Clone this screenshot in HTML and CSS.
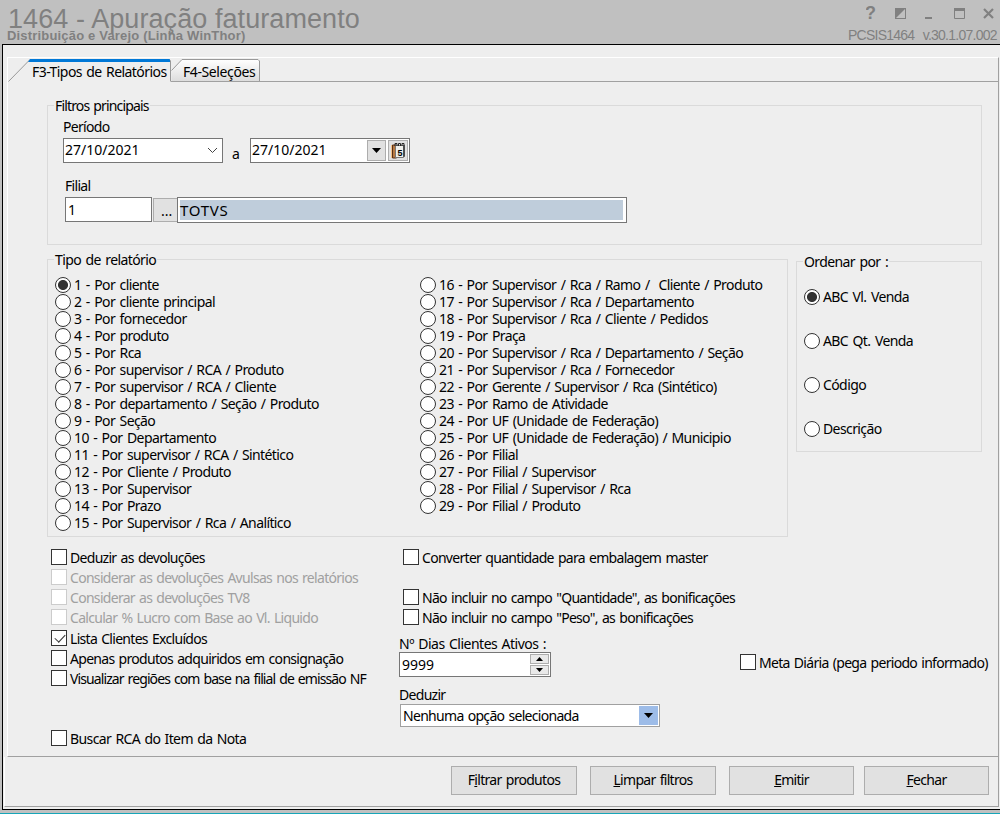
FILE: index.html
```html
<!DOCTYPE html>
<html lang="pt-BR">
  <head>
    <meta charset="UTF-8" />
    <meta name="viewport" content="width=device-width, initial-scale=1.0" />
    <title>1464 - Apuração faturamento</title>
    <link rel="stylesheet" href="styles.css">
  </head>
  <body>
    <div class="window">
      <div class="header">
        <div class="titles">
          <h1>1464 - Apuração faturamento</h1>
          <h2>Distribuição e Varejo (Linha WinThor)</h2>
        </div>
        <div class="header-right">
          <svg class="win-icons" width="134" height="18" viewBox="0 0 134 18">
            <text class="help" x="-1" y="15">?</text>
            <rect x="29.5" y="4.5" width="10" height="10" fill="none" stroke="#808080" />
            <path d="M29 4h11L29 15z" fill="#808080" />
            <rect x="59" y="13" width="7" height="2" fill="#808080" />
            <path d="M88.5 4v10.5h10V4" fill="none" stroke="#808080" />
            <rect x="88" y="4" width="11" height="3" fill="#808080" />
            <path d="M118 5l9 9M127 5l-9 9" stroke="#808080" stroke-width="2.2" />
          </svg>
          <div class="version">PCSIS1464&nbsp; v.30.1.07.002</div>
        </div>
      </div>

      <div class="frame">
        <div class="page">
          <div class="tabs">
            <svg class="tab-shapes" width="260" height="25" viewBox="0 0 260 25">
              <defs>
                <linearGradient id="tabfill" x1="0" y1="0" x2="0" y2="1">
                  <stop offset="0" stop-color="#ffffff" />
                  <stop offset="1" stop-color="#dcdcdc" />
                </linearGradient>
              </defs>
              <path d="M163.5 23.5V12.5L174 1.5h76l1.5 1.5v20.5z" fill="url(#tabfill)" />
              <path d="M163.5 12.5L174 1.5h76l1.5 1.5v20.5" fill="none" stroke="#999999" />
              <path d="M0.5 23.5L22 1.5h139.5l1 1.5v20.5" fill="none" stroke="#999999" />
              <path d="M20 4l2-3h139.5l.5 1v2z" fill="#0078d7" />
            </svg>
            <div class="tab active">F3-Tipos de Relatórios</div>
            <div class="tab">F4-Seleções</div>
            <div class="tab-line"></div>
          </div>

          <div class="content">
            <div class="group filters">
              <span class="legend">Filtros principais</span>
              <div class="label">Período</div>
              <div class="row">
                <div class="field date">
                  <span>27/10/2021</span>
                  <svg class="chevron" width="11" height="7" viewBox="0 0 11 7"><path d="M1 1l4.5 4.5L10 1" fill="none" stroke="#444444" /></svg>
                </div>
                <span class="to">a</span>
                <div class="field date">
                  <span>27/10/2021</span>
                  <div class="mini drop"><svg width="9" height="5" viewBox="0 0 9 5"><path d="M0 0h9L4.5 5z" /></svg></div>
                  <div class="mini cal">
                    <svg width="17" height="18" viewBox="0 0 17 18">
                      <path d="M2.5 3h4v13h-4z" fill="#b87942" stroke="#573016" />
                      <path d="M1.5 3v13" stroke="#f2c087" />
                      <path d="M5.5 3.5h8v12h-8z" fill="#f0f0ec" stroke="#777777" />
                      <path d="M13.5 3.5h1v11h-1z" fill="#aaaaaa" stroke="#4c4c4c" />
                      <path d="M5 4V1.5h2V4M8.5 4V1.5h2V4M12 4V1.5h2V4" fill="none" stroke="#252525" />
                      <text class="cal-day" x="7.5" y="14">5</text>
                    </svg>
                  </div>
                </div>
              </div>
              <div class="label branch-label">Filial</div>
              <div class="row branch">
                <div class="field code">1</div>
                <div class="browse">...</div>
                <div class="field name"><span>TOTVS</span></div>
              </div>
            </div>

            <div class="middle">
              <div class="group report">
                <span class="legend">Tipo de relatório</span>
                <div class="columns">
                  <div class="col">
                    <label><input type="radio" name="tipo" checked><span>1 - Por cliente</span></label>
                    <label><input type="radio" name="tipo"><span>2 - Por cliente principal</span></label>
                    <label><input type="radio" name="tipo"><span>3 - Por fornecedor</span></label>
                    <label><input type="radio" name="tipo"><span>4 - Por produto</span></label>
                    <label><input type="radio" name="tipo"><span>5 - Por Rca</span></label>
                    <label><input type="radio" name="tipo"><span>6 - Por supervisor / RCA / Produto</span></label>
                    <label><input type="radio" name="tipo"><span>7 - Por supervisor / RCA / Cliente</span></label>
                    <label><input type="radio" name="tipo"><span>8 - Por departamento / Seção / Produto</span></label>
                    <label><input type="radio" name="tipo"><span>9 - Por Seção</span></label>
                    <label><input type="radio" name="tipo"><span>10 - Por Departamento</span></label>
                    <label><input type="radio" name="tipo"><span>11 - Por supervisor / RCA / Sintético</span></label>
                    <label><input type="radio" name="tipo"><span>12 - Por Cliente / Produto</span></label>
                    <label><input type="radio" name="tipo"><span>13 - Por Supervisor</span></label>
                    <label><input type="radio" name="tipo"><span>14 - Por Prazo</span></label>
                    <label><input type="radio" name="tipo"><span>15 - Por Supervisor / Rca / Analítico</span></label>
                  </div>
                  <div class="col">
                    <label><input type="radio" name="tipo"><span>16 - Por Supervisor / Rca / Ramo /&nbsp; Cliente / Produto</span></label>
                    <label><input type="radio" name="tipo"><span>17 - Por Supervisor / Rca / Departamento</span></label>
                    <label><input type="radio" name="tipo"><span>18 - Por Supervisor / Rca / Cliente / Pedidos</span></label>
                    <label><input type="radio" name="tipo"><span>19 - Por Praça</span></label>
                    <label><input type="radio" name="tipo"><span>20 - Por Supervisor / Rca / Departamento / Seção</span></label>
                    <label><input type="radio" name="tipo"><span>21 - Por Supervisor / Rca / Fornecedor</span></label>
                    <label><input type="radio" name="tipo"><span>22 - Por Gerente / Supervisor / Rca (Sintético)</span></label>
                    <label><input type="radio" name="tipo"><span>23 - Por Ramo de Atividade</span></label>
                    <label><input type="radio" name="tipo"><span>24 - Por UF (Unidade de Federação)</span></label>
                    <label><input type="radio" name="tipo"><span>25 - Por UF (Unidade de Federação) / Municipio</span></label>
                    <label><input type="radio" name="tipo"><span>26 - Por Filial</span></label>
                    <label><input type="radio" name="tipo"><span>27 - Por Filial / Supervisor</span></label>
                    <label><input type="radio" name="tipo"><span>28 - Por Filial / Supervisor / Rca</span></label>
                    <label><input type="radio" name="tipo"><span>29 - Por Filial / Produto</span></label>
                  </div>
                </div>
              </div>

              <div class="group order">
                <span class="legend">Ordenar por :</span>
                <div class="order-list">
                  <label><input type="radio" name="ordem" checked><span>ABC Vl. Venda</span></label>
                  <label><input type="radio" name="ordem"><span>ABC Qt. Venda</span></label>
                  <label><input type="radio" name="ordem"><span>Código</span></label>
                  <label><input type="radio" name="ordem"><span>Descrição</span></label>
                </div>
              </div>
            </div>

            <div class="options">
              <div class="opt-left">
                <label><input type="checkbox"><span>Deduzir as devoluções</span></label>
                <label><input type="checkbox" disabled><span>Considerar as devoluções Avulsas nos relatórios</span></label>
                <label><input type="checkbox" disabled><span>Considerar as devoluções TV8</span></label>
                <label><input type="checkbox" disabled><span>Calcular % Lucro com Base ao Vl. Liquido</span></label>
                <label class="excl"><input type="checkbox" checked><span>Lista Clientes Excluídos</span></label>
                <label><input type="checkbox"><span>Apenas produtos adquiridos em consignação</span></label>
                <label class="regions"><input type="checkbox"><span>Visualizar regiões com base na filial de emissão NF</span></label>
                <label class="rca"><input type="checkbox"><span>Buscar RCA do Item da Nota</span></label>
              </div>
              <div class="opt-mid">
                <label><input type="checkbox"><span>Converter quantidade para embalagem master</span></label>
                <label class="qty"><input type="checkbox"><span>Não incluir no campo "Quantidade", as bonificações</span></label>
                <label><input type="checkbox"><span>Não incluir no campo "Peso", as bonificações</span></label>
                <div class="label days-label">Nº Dias Clientes Ativos :</div>
                <div class="field days">
                  <span>9999</span>
                  <div class="spin">
                    <div><svg width="7" height="4" viewBox="0 0 7 4"><path d="M0 4h7L3.5 0z" /></svg></div>
                    <div><svg width="7" height="4" viewBox="0 0 7 4"><path d="M0 0h7L3.5 4z" /></svg></div>
                  </div>
                </div>
                <div class="label deduct-label">Deduzir</div>
                <div class="field deduct">
                  <span>Nenhuma opção selecionada</span>
                  <div class="arrow"><svg width="9" height="5" viewBox="0 0 9 5"><path d="M0 0h9L4.5 5z" /></svg></div>
                </div>
              </div>
              <div class="opt-right">
                <label><input type="checkbox"><span>Meta Diária (pega periodo informado)</span></label>
              </div>
            </div>
          </div>
        </div>

        <div class="footer">
          <button class="wide"><span>F<u>i</u>ltrar produtos</span></button>
          <button class="wide"><span><u>L</u>impar filtros</span></button>
          <button class="emit"><span><u>E</u>mitir</span></button>
          <button><span><u>F</u>echar</span></button>
        </div>
      </div>
    </div>
  </body>
</html>
```

FILE: styles.css
```css
* {
  box-sizing: border-box;
}

body {
  margin: 0;
  background-color: #ffffff;
  font-family: "Noto Sans", "Open Sans", sans-serif;
  font-size: 14px;
  line-height: 18px;
  letter-spacing: -0.7px;
  word-spacing: 1.2px;
  color: #000000;
  overflow: hidden;
}

.window {
  width: 1000px;
  height: 814px;
  background-color: #c0c0c0;
  border-bottom: 1px solid #16a5b8;
  padding-left: 2px;
}

.header {
  height: 44px;
  display: flex;
  justify-content: space-between;
  font-family: "Liberation Sans", Arial, sans-serif;
  color: #808080;
  letter-spacing: 0;
  word-spacing: 0;
}

.titles {
  padding: 4px 0 0 6px;
}

h1 {
  margin: 0;
  font-size: 27px;
  line-height: 30px;
  font-weight: normal;
  letter-spacing: 0.08px;
  white-space: nowrap;
}

h2 {
  margin: -5px 0 0 -1px;
  font-size: 13px;
  line-height: 14px;
  letter-spacing: 0.18px;
  white-space: nowrap;
}

.header-right {
  width: 152px;
  padding-top: 4px;
}

.win-icons {
  display: block;
  margin-left: 18px;
}

.help {
  font-size: 18px;
  font-weight: bold;
  fill: #808080;
}

.version {
  margin-top: 5px;
  font-size: 14px;
  line-height: 16px;
  letter-spacing: -0.75px;
  word-spacing: 1px;
  white-space: nowrap;
}

.frame {
  height: 766px;
  border: 1px solid #000000;
  border-right: none;
  background-color: #eeeeee;
  padding: 12px 1px 0 1px;
}

.page {
  height: 700px;
  margin-left: 3px;
  border: 1px solid #ffffff;
  border-right-color: #a0a0a0;
  border-bottom-color: #a0a0a0;
}

.tabs {
  position: relative;
  height: 24px;
  display: flex;
  letter-spacing: -0.55px;
}

.tab-shapes {
  position: absolute;
  left: 0;
  top: 0;
}

.tab {
  position: relative;
  width: 163px;
  padding: 5px 0 0 24px;
  white-space: nowrap;
}

.tab:nth-of-type(2) {
  width: 89px;
  padding-left: 12px;
  letter-spacing: -0.4px;
  border-bottom: 1px solid #a0a0a0;
}

.tab-line {
  flex: 1;
  border-bottom: 1px solid #a0a0a0;
}

.content {
  padding: 23px 0 0 39px;
}

.group {
  border: 1px solid #dadada;
}

.legend {
  display: block;
  width: fit-content;
  height: 18px;
  margin: -9px 0 0 6px;
  padding: 0 1px;
  background-color: #eeeeee;
}

.filters {
  width: 935px;
  height: 140px;
}

.filters .legend {
  letter-spacing: -0.85px;
}

.label {
  white-space: nowrap;
}

.filters .label {
  margin: 3px 0 2px 15px;
}

.filters .branch-label {
  margin: 14px 0 2px 17px;
}

.row {
  display: flex;
  margin-left: 15px;
}

.field {
  display: flex;
  align-items: center;
  border: 1px solid #767676;
  background-color: #ffffff;
  padding-left: 2px;
  white-space: nowrap;
}

.date {
  width: 160px;
  height: 25px;
  letter-spacing: 0;
}

.date span {
  flex: 1;
  margin-left: -1px;
  padding-bottom: 2px;
}

.chevron {
  margin-right: 4px;
}

.to {
  width: 27px;
  padding: 7px 0 0 9px;
}

.mini {
  display: flex;
  align-items: center;
  justify-content: center;
  height: 21px;
  border: 1px solid #adadad;
  background-color: #e1e1e1;
}

.drop {
  width: 19px;
  margin-right: 2px;
}

.cal {
  width: 20px;
  margin-right: 1px;
}

.cal-day {
  font: bold 9px "Liberation Sans", sans-serif;
}

.branch {
  margin-left: 17px;
}

.code {
  width: 87px;
  height: 25px;
}

.browse {
  width: 24px;
  height: 24px;
  margin: 1px 0 0 1px;
  padding-top: 3px;
  padding-left: 7px;
  letter-spacing: 0;
  border: 1px solid #adadad;
  border-right: none;
  background-color: #e1e1e1;
}

.name {
  width: 450px;
  height: 26px;
}

.name span {
  width: 443px;
  height: 20px;
  line-height: 20px;
  font-size: 15px;
  letter-spacing: 0.7px;
  background-color: #bfcddb;
}

.middle {
  display: flex;
  align-items: flex-start;
  gap: 8px;
  margin-top: 14px;
  letter-spacing: -0.6px;
  word-spacing: 1.4px;
}

.report {
  width: 741px;
  height: 278px;
}

.columns {
  display: flex;
  margin: 7px 0 0 7px;
}

.col {
  width: 365px;
}

label {
  display: flex;
  align-items: center;
  gap: 3px;
  white-space: nowrap;
}

.col label {
  height: 17px;
}

input {
  appearance: none;
  flex: none;
  width: 16px;
  height: 16px;
  margin: 0;
  border: 1px solid #333333;
  background-color: #ffffff;
}

input[type="radio"] {
  border-radius: 50%;
}

input[type="radio"]:checked {
  background: radial-gradient(circle, #333333 4.6px, #ffffff 5.4px);
}

input[type="checkbox"] {
  position: relative;
  margin-bottom: 2px;
}

/* check mark */
input[type="checkbox"]:checked::after {
  content: "";
  position: absolute;
  left: 5px;
  top: 1px;
  width: 5px;
  height: 9px;
  border: solid #333333;
  border-width: 0 1.5px 1.5px 0;
  transform: rotate(43deg);
}

input:disabled {
  border-color: #cccccc;
}

input:disabled + span {
  color: #a0a0a0;
}

.order {
  width: 186px;
  height: 191px;
  margin-top: 2px;
}

.order-list {
  display: flex;
  flex-direction: column;
  gap: 26px;
  margin: 17px 0 0 7px;
}

.order-list label {
  height: 18px;
}

.options {
  display: flex;
  padding: 11px 0 0 4px;
}

.options label {
  height: 20px;
}

.opt-left {
  width: 348px;
}

.opt-left .excl {
  margin-top: 1px;
}

.opt-left .regions {
  letter-spacing: -0.9px;
}

.opt-left .rca {
  margin-top: 40px;
  letter-spacing: -0.6px;
}

.opt-mid {
  width: 341px;
}

.opt-mid label {
  margin-left: 4px;
}

.opt-mid .qty {
  margin-top: 20px;
}

.days-label {
  margin-top: 7px;
  letter-spacing: -0.5px;
}

.days {
  width: 152px;
  height: 25px;
  margin-top: -1px;
  letter-spacing: 0;
}

.days span,
.deduct span {
  flex: 1;
}

.spin {
  display: flex;
  flex-direction: column;
  gap: 1px;
  margin-right: 1px;
}

.spin div {
  display: flex;
  align-items: center;
  justify-content: center;
  width: 19px;
  height: 10px;
  border: 1px solid #adadad;
  background-color: #e9e9e9;
}

.deduct-label {
  margin-top: 9px;
}

.deduct {
  width: 260px;
  height: 23px;
  margin-left: 1px;
  border-color: #a0a0a0;
}

.arrow {
  display: flex;
  align-items: center;
  justify-content: center;
  width: 19px;
  height: 19px;
  margin-right: 1px;
  background-color: #9dbce8;
}

.opt-right {
  padding-top: 105px;
}

.footer {
  display: flex;
  height: 50px;
  border-left: 1px solid #ffffff;
  border-right: 1px solid #a0a0a0;
  border-bottom: 1px solid #a0a0a0;
  padding: 9px 9px 0 0;
  justify-content: flex-end;
}

button {
  width: 125px;
  height: 29px;
  border: 1px solid #adadad;
  background-color: #e1e1e1;
  font: inherit;
  letter-spacing: inherit;
  word-spacing: inherit;
  color: #000000;
  padding: 0 0 2px 0;
}

.wide {
  width: 126px;
  margin-right: 13px;
}

.emit {
  margin-right: 10px;
}
```
